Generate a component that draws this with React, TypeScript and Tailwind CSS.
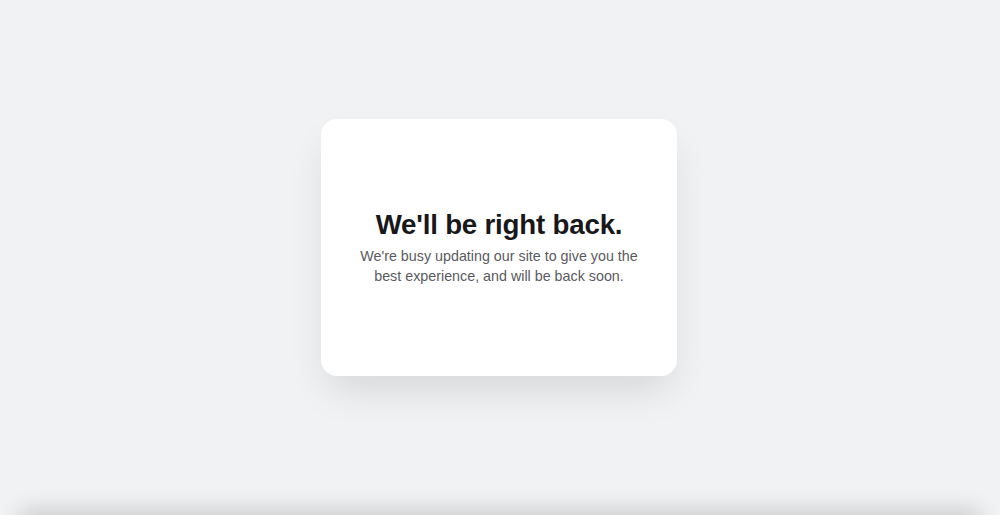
export default function App() {
  return (
    <div className="bg-[#f1f2f4]" style={{ fontFamily: '"Liberation Sans", Arial, sans-serif' }}>
      <div className="h-[515px] flex items-center justify-center">
        <div className="w-[356px] h-[257px] bg-white rounded-2xl shadow-[0_20px_40px_-8px_rgba(0,0,0,0.12)] flex flex-col items-center justify-center text-center px-8 -mt-[21px] ml-[-2px]">
          <h1 className="text-[27.7px] leading-[34px] font-bold text-[#18181b] tracking-[-0.2px]">We'll be right back.</h1>
          <p className="mt-[5px] text-[14.3px] leading-[19.5px] text-[#5a5a5e]">
            We're busy updating our site to give you the<br />best experience, and will be back soon.
          </p>
        </div>
      </div>
      <div className="mx-[20px] h-[200px] bg-[#f1f2f4] shadow-[0_-6px_20px_rgba(0,0,0,0.15)]"></div>
    </div>
  );
}
